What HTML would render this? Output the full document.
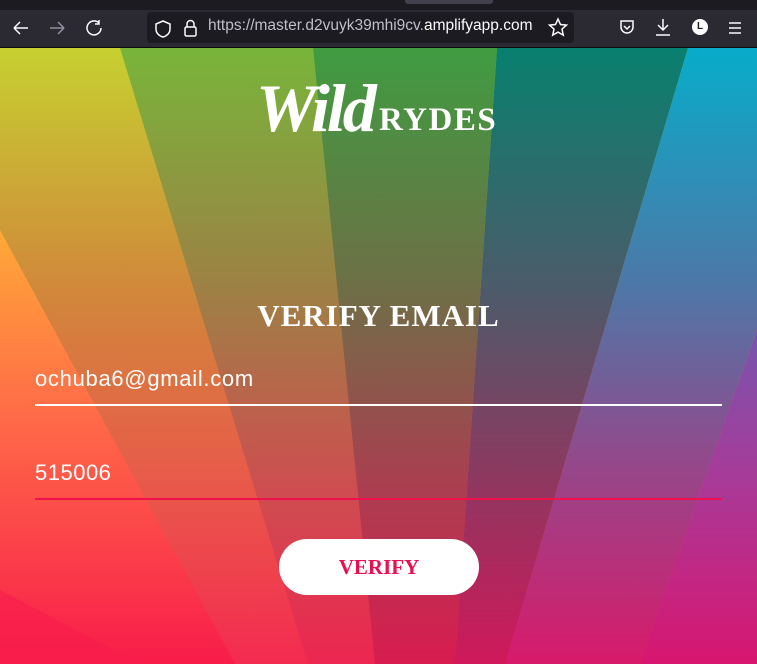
<!DOCTYPE html><html><head><meta charset="utf-8"><style>
body{margin:0;width:757px;height:664px;overflow:hidden;position:relative;font-family:"Liberation Sans",sans-serif;background:#2b2a33}
.abs{position:absolute}
</style></head><body>
<div class="abs" style="left:0;top:0;width:757px;height:10px;background:#1c1b22"></div>
<div class="abs" style="left:405px;top:0;width:88px;height:4px;background:#42414d;border-radius:0 0 3px 3px"></div>
<div class="abs" style="left:0;top:10px;width:757px;height:37px;background:#2b2a33"></div>
<div class="abs" style="left:0;top:47px;width:757px;height:1px;background:#0c0c0d"></div>
<div class="abs" style="left:147px;top:12px;width:427px;height:31px;background:#1c1b22;border-radius:4px"></div>
<svg class="abs" style="left:0;top:10px" width="757" height="37" fill="none" stroke="#fbfbfe" stroke-width="1.5">
<path d="M14 18h14M14 18l6-6M14 18l6 6"/>
<path d="M50 18h14M64 18l-6-6M64 18l-6 6" stroke="#8f8f9d"/>
<path d="M99 13a7 7 0 1 0 2 5M99 10v4h-4" />
<path d="M163 11l-7 3v5c0 4 3 7 7 8 4-1 7-4 7-8v-5z"/>
<rect x="185" y="17" width="11" height="9" rx="1.5"/><path d="M187 17v-3a3.5 3.5 0 0 1 7 0v3"/>
<path d="M558 9l2.5 5.5 6 .6-4.5 4 1.3 6-5.3-3-5.3 3 1.3-6-4.5-4 6-.6z"/>
<path d="M621 11h12v6a6 6 0 0 1-12 0zM624 16l3 3 3-3"/>
<path d="M663 9v11M658 15l5 5 5-5M656 25h14"/>
<path d="M729 13h12M729 18h12M729 23h12"/>
</svg>
<div class="abs" style="left:692px;top:19px;width:16px;height:16px;border-radius:50%;background:#fff;color:#1c1b22;font:bold 10px/16px 'Liberation Sans';text-align:center">L</div>
<div class="abs" style="left:208px;top:17px;font-size:15.5px;color:#bfbfc9;white-space:nowrap;width:334px;overflow:hidden">https://master.d2vuyk39mhi9cv.<span style="color:#fbfbfe">amplifyapp.com</span></div>

<svg class="abs" style="left:0;top:48px" width="757" height="616" viewBox="0 48 757 616">
<defs>
<linearGradient id="g0" gradientUnits="userSpaceOnUse" x1="0" y1="48" x2="0" y2="664"><stop offset="0" stop-color="#c8d42c"/><stop offset=".3" stop-color="#ffa838"/><stop offset=".6" stop-color="#ff6a48"/><stop offset="1" stop-color="#f81c4a"/></linearGradient>
<linearGradient id="g1" gradientUnits="userSpaceOnUse" x1="0" y1="48" x2="0" y2="664"><stop offset="0" stop-color="#c6d030"/><stop offset=".38" stop-color="#d08a3a"/><stop offset=".7" stop-color="#e85a4a"/><stop offset="1" stop-color="#f42a50"/></linearGradient>
<linearGradient id="g2" gradientUnits="userSpaceOnUse" x1="0" y1="48" x2="0" y2="664"><stop offset="0" stop-color="#78b53a"/><stop offset=".38" stop-color="#9c8244"/><stop offset=".7" stop-color="#cc5050"/><stop offset="1" stop-color="#ec2650"/></linearGradient>
<linearGradient id="g3" gradientUnits="userSpaceOnUse" x1="0" y1="48" x2="0" y2="664"><stop offset="0" stop-color="#3f9c41"/><stop offset=".38" stop-color="#6d7046"/><stop offset=".7" stop-color="#a84050"/><stop offset="1" stop-color="#d81c50"/></linearGradient>
<linearGradient id="g4" gradientUnits="userSpaceOnUse" x1="0" y1="48" x2="0" y2="664"><stop offset="0" stop-color="#08806f"/><stop offset=".38" stop-color="#4a5c6a"/><stop offset=".7" stop-color="#8e3860"/><stop offset="1" stop-color="#d0185a"/></linearGradient>
<linearGradient id="g5" gradientUnits="userSpaceOnUse" x1="0" y1="48" x2="0" y2="664"><stop offset="0" stop-color="#08acca"/><stop offset=".38" stop-color="#4c78a8"/><stop offset=".7" stop-color="#9a4488"/><stop offset="1" stop-color="#d81a6a"/></linearGradient>
<linearGradient id="g6" gradientUnits="userSpaceOnUse" x1="0" y1="48" x2="0" y2="664"><stop offset=".4" stop-color="#6a5cb4"/><stop offset=".7" stop-color="#a83a98"/><stop offset="1" stop-color="#d81670"/></linearGradient>
</defs>
<rect x="0" y="48" width="757" height="616" fill="url(#g0)"/>
<polygon points="0,48 120,48 308,664 235,664 0,230" fill="url(#g1)"/>
<polygon points="120,48 313,48 375,664 308,664" fill="url(#g2)"/>
<polygon points="313,48 497,48 455,664 375,664" fill="url(#g3)"/>
<polygon points="497,48 688,48 505,664 455,664" fill="url(#g4)"/>
<polygon points="688,48 757,48 757,330 640,664 505,664" fill="url(#g5)"/>
<polygon points="757,330 757,664 640,664" fill="url(#g6)"/>
<polygon points="0,590 0,664 140,664" fill="#f81c4c" opacity=".6"/>
</svg>

<div class="abs" style="left:256px;top:74px;font:italic bold 68px/1 'Liberation Serif',serif;color:#fff;letter-spacing:-3px">Wild</div>
<div class="abs" style="left:379px;top:104px;font:bold 33px/1 'Liberation Serif',serif;color:#fff;letter-spacing:1.5px">RYDES</div>
<div class="abs" style="left:0;top:300px;width:757px;text-align:center;font:bold 31px/1 'Liberation Serif',serif;color:#fff;letter-spacing:1px">VERIFY EMAIL</div>
<div class="abs" style="left:35px;top:366px;font-size:22px;color:#fff;letter-spacing:0.7px">ochuba6@gmail.com</div>
<div class="abs" style="left:35px;top:404px;width:687px;height:2px;background:#fff"></div>
<div class="abs" style="left:35px;top:460px;font-size:22px;color:#fff;letter-spacing:0.5px">515006</div>
<div class="abs" style="left:35px;top:498px;width:687px;height:2px;background:#f0104e"></div>
<div class="abs" style="left:279px;top:539px;width:200px;height:56px;border-radius:28px;background:#fff;text-align:center;font:bold 21px/56px 'Liberation Serif',serif;color:#ec0f50">VERIFY</div>
</body></html>
